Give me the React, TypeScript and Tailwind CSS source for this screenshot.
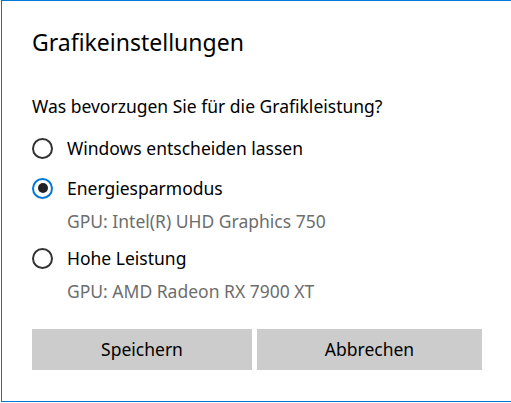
import { useState } from "react";

type Option = {
  id: string;
  label: string;
  gpu?: string;
};

const options: Option[] = [
  { id: "auto", label: "Windows entscheiden lassen" },
  { id: "saver", label: "Energiesparmodus", gpu: "GPU: Intel(R) UHD Graphics 750" },
  { id: "perf", label: "Hohe Leistung", gpu: "GPU: AMD Radeon RX 7900 XT" },
];

function Radio({ checked }: { checked: boolean }) {
  return checked ? (
    <span className="flex h-[21px] w-[21px] shrink-0 items-center justify-center rounded-full border-2 border-[#0078d7]">
      <span className="h-[10px] w-[10px] rounded-full bg-[#222]" />
    </span>
  ) : (
    <span className="h-[21px] w-[21px] shrink-0 rounded-full border-2 border-[#333]" />
  );
}

export default function App() {
  const [selected, setSelected] = useState("saver");

  return (
    <div
      className="ml-px h-[402px] border-b border-l border-t border-[#0078d7] bg-white pl-[30px] pr-[28px] text-black"
      style={{ fontFamily: '"Segoe UI", "Noto Sans", sans-serif' }}
    >
      <h1 className="pt-[25px] text-[23px] leading-[32px] font-normal">Grafikeinstellungen</h1>

      <p className="mt-[37px] text-[17.5px] leading-[22px]">Was bevorzugen Sie für die Grafikleistung?</p>

      <div className="mt-[11px] flex flex-col">
        {options.map((o) => (
          <div key={o.id} className="flex flex-col">
            <button
              className="flex h-10 items-center gap-[14px] text-left"
              onClick={() => setSelected(o.id)}
            >
              <Radio checked={selected === o.id} />
              <span className="text-[17.5px] leading-[22px]">{o.label}</span>
            </button>
            {o.gpu && (
              <span className="pb-[4px] pl-[35px] text-[17.5px] leading-[26px] text-[#6d6d6d]">
                {o.gpu}
              </span>
            )}
          </div>
        ))}
      </div>

      <div className="mt-[21px] flex gap-[5px]">
        <button className="h-[41px] w-[220px] bg-[#cccccc] text-[17.5px]">Speichern</button>
        <button className="h-[41px] w-[225px] bg-[#cccccc] text-[17.5px]">Abbrechen</button>
      </div>
    </div>
  );
}
